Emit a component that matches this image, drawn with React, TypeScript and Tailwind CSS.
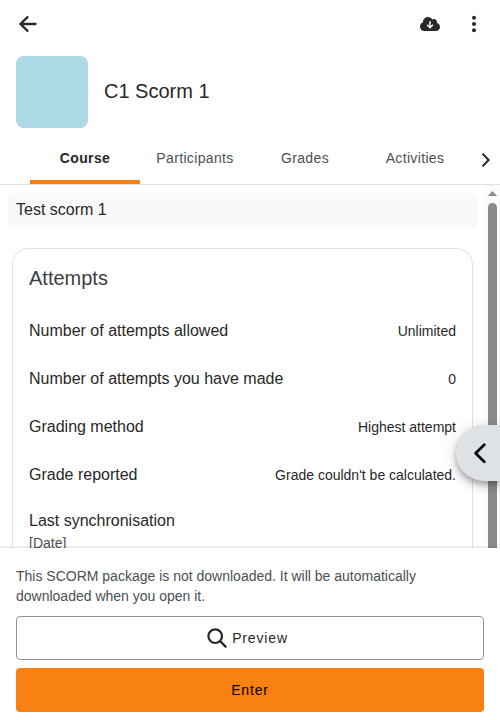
import React from "react";
import { FaCloudArrowDown } from "react-icons/fa6";

const tabs = ["Course", "Participants", "Grades", "Activities"];

const attempts = [
  { label: "Number of attempts allowed", value: "Unlimited" },
  { label: "Number of attempts you have made", value: "0" },
  { label: "Grading method", value: "Highest attempt" },
  { label: "Grade reported", value: "Grade couldn't be calculated." },
];

function Header() {
  return (
    <header className="flex h-12 shrink-0 items-center justify-between pr-4 pl-[18px]">
      <button className="flex h-12 w-5 items-center justify-center" aria-label="Back">
        <svg
          className="h-5 w-5"
          viewBox="0 0 20 20"
          fill="none"
          stroke="currentColor"
          strokeWidth="2.3"
          strokeLinecap="round"
          strokeLinejoin="round"
        >
          <path d="M9.5 3.2 2.4 10l7.1 6.8M2.4 10h15.2" />
        </svg>
      </button>
      <div className="flex items-center gap-6">
        <FaCloudArrowDown className="h-5 w-5" />
        <svg className="h-5 w-5" viewBox="0 0 20 20" fill="currentColor">
          <circle cx="10" cy="3.8" r="2" />
          <circle cx="10" cy="10" r="2" />
          <circle cx="10" cy="16.2" r="2" />
        </svg>
      </div>
    </header>
  );
}

function Tabs() {
  return (
    <nav className="flex h-[49px] shrink-0 border-b border-[#dee2e6] pl-[30px] text-sm tracking-[0.35px] text-[#4a5054]">
      {tabs.map((tab, i) => (
        <div
          key={tab}
          className={
            i === 0
              ? "flex w-[110px] items-center justify-center border-b-4 border-[#f98012] font-bold text-[#282828]"
              : "flex w-[110px] items-center justify-center border-b-4 border-transparent"
          }
        >
          {tab}
        </div>
      ))}
      <div className="flex w-[30px] items-center justify-center text-[#282828]">
        <svg className="h-4 w-4" viewBox="0 0 16 16" fill="none" stroke="currentColor" strokeWidth="2.1">
          <path d="M5.5 1.6 11.6 8 5.5 14.4" />
        </svg>
      </div>
    </nav>
  );
}

function Scrollbar() {
  return (
    <div className="flex w-[15px] shrink-0 flex-col items-center bg-[#fcfcfc] pt-[6px]">
      <svg className="h-[5px] w-[9px] shrink-0" viewBox="0 0 9 5" fill="#8b8b8b">
        <path d="M4.5 0 9 5H0Z" />
      </svg>
      <div className="mt-[7px] w-[9px] flex-1 rounded-t-full bg-[#8b8b8b]" />
    </div>
  );
}

export default function App() {
  return (
    <div className="relative flex h-[720px] w-[500px] flex-col overflow-hidden bg-white font-['Liberation_Sans',Arial,sans-serif] text-[#282828]">
      <Header />
      <section className="flex h-[88px] shrink-0 items-start gap-4 px-4 pt-2">
        <div className="h-[72px] w-[72px] rounded-lg bg-[#add8e6]" />
        <h1 className="pt-[22px] text-xl leading-[26px]">C1 Scorm 1</h1>
      </section>
      <Tabs />
      <main className="flex h-[363px] shrink-0 overflow-hidden">
        <div className="flex-1 pt-2">
          <div className="mr-2 ml-2 flex h-[34px] items-center rounded bg-[#f8f9fa] px-2 text-base">
            Test scorm 1
          </div>
          <div className="mx-3 mt-[21px] h-[400px] rounded-2xl border border-[#dee2e6] px-4">
            <h2 className="pt-4 text-xl leading-[26px] text-[#3a3f44]">Attempts</h2>
            <div className="pt-4">
              {attempts.map((row) => (
                <div key={row.label} className="flex h-12 items-center justify-between">
                  <span className="text-base">{row.label}</span>
                  <span className="text-sm">{row.value}</span>
                </div>
              ))}
            </div>
            <div className="pt-[10px] text-base leading-6">Last synchronisation</div>
            <div className="text-sm leading-[21px] text-[#4a5054]">[Date]</div>
          </div>
        </div>
        <Scrollbar />
      </main>
      <button
        className="absolute top-[425px] right-0 flex h-14 w-11 items-center justify-center rounded-l-full bg-[#dee2e6] pl-[4px] text-black shadow-[0_3px_5px_rgba(0,0,0,0.2),0_6px_10px_rgba(0,0,0,0.14),0_1px_18px_rgba(0,0,0,0.12)]"
        aria-label="Open block drawer"
      >
        <svg
          className="h-6 w-6"
          viewBox="0 0 24 24"
          fill="none"
          stroke="currentColor"
          strokeWidth="2.7"
          strokeLinecap="round"
          strokeLinejoin="round"
        >
          <path d="M16.3 3.7 7.6 12.2l8.7 8.5" />
        </svg>
      </button>
      <footer className="z-10 flex flex-1 flex-col bg-white px-4 pt-[18px] pb-2 shadow-[0_0_3px_rgba(0,0,0,0.25)]">
        <p className="text-sm leading-5 text-[#4a5054]">
          This SCORM package is not downloaded. It will be automatically downloaded when you open it.
        </p>
        <button className="mt-[10px] flex h-11 shrink-0 items-center justify-center gap-[5px] rounded border border-[#8f959e] pr-[5px] text-sm tracking-[0.84px]">
          <svg className="h-5 w-5" viewBox="0 0 20 20" fill="none" stroke="currentColor">
            <circle cx="8.2" cy="8.2" r="6.8" strokeWidth="2.2" />
            <path d="M13.1 13.1 18.6 18.6" strokeWidth="2.2" strokeLinecap="round" />
          </svg>
          Preview
        </button>
        <button className="mt-2 h-11 shrink-0 rounded bg-[#f98012] text-sm tracking-[0.84px] text-black">
          Enter
        </button>
      </footer>
    </div>
  );
}
